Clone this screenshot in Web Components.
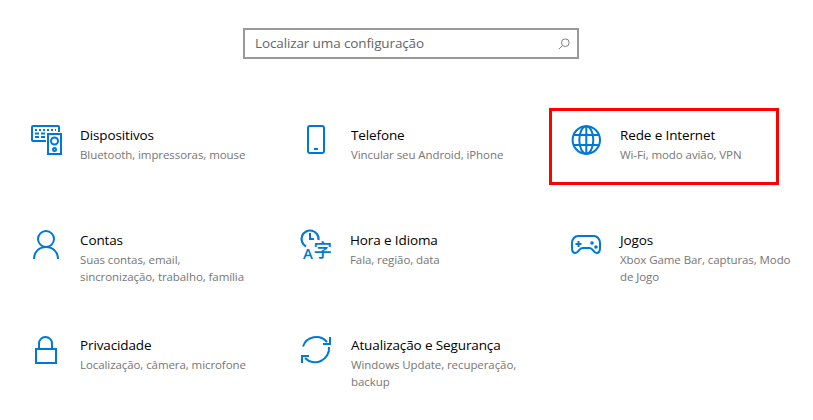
<!DOCTYPE html>
<html lang="pt-BR">
<head>
<meta charset="utf-8">
<title>Configurações</title>
<style>
  html, body { margin: 0; background: #fff; }
  body { font-family: "Open Sans", "Noto Sans", sans-serif; }
  svg.ico { width: 32px; height: 32px; fill: none; stroke: #0078d7; stroke-width: 2; display: block; overflow: visible; }
</style>
</head>
<body>
<settings-home>
  <settings-search slot="search" placeholder="Localizar uma configuração"></settings-search>

  <settings-tile name="Dispositivos" info="Bluetooth, impressoras, mouse">
    <svg class="ico" viewBox="0 0 32 32" slot="icon">
      <path d="M15 16H2a1 1 0 0 1-1-1V2a1 1 0 0 1 1-1h25a1 1 0 0 1 1 1v5"/>
      <rect x="17" y="9" width="13" height="20"/>
      <circle cx="23.500" cy="16" r="3.500"/>
      <circle cx="23.500" cy="24.500" r="1.500"/>
      <path d="M4 5h2M8 5h2M12 5h2M16 5h2M20 5h2M24 5h1M4 8.500h4M10 8.500h4M4 12h4M10 12h4" stroke-width="1.800"/>
    </svg>
  </settings-tile>
  <settings-tile name="Telefone" info="Vincular seu Android, iPhone" style="--gap: 18px">
    <svg class="ico" viewBox="0 0 32 32" slot="icon">
      <rect x="7" y="1" width="16" height="27" rx="2"/>
      <path d="M13 24h4"/>
    </svg>
  </settings-tile>
  <settings-tile name="Rede e Internet" info="Wi-Fi, modo avião, VPN" highlight>
    <svg class="ico" viewBox="0 0 32 32" slot="icon">
      <circle cx="15.300" cy="15" r="13.700"/>
      <ellipse cx="15.300" cy="15" rx="7" ry="13.700"/>
      <path d="M2.800 10h25M2.800 20h25M15.300 1.500v27"/>
    </svg>
  </settings-tile>

  <settings-tile name="Contas" info="Suas contas, email, sincronização, trabalho, família">
    <svg class="ico" viewBox="0 0 32 32" slot="icon">
      <circle cx="15" cy="9" r="8"/>
      <path d="M3 29c0-7 5-12 12-12s12 5 12 12"/>
    </svg>
  </settings-tile>
  <settings-tile name="Hora e Idioma" info="Fala, região, data">
    <svg class="ico" viewBox="0 0 32 32" slot="icon">
      <path d="M5 16.500A8.500 8.500 0 1 1 17.500 10" stroke-width="2.200"/>
      <path d="M9 3v6h4" stroke-width="2"/>
      <text x="2" y="29" font-family="Open Sans" font-size="15" font-weight="600" fill="#0078d7" stroke="none">A</text>
      <text x="12.500" y="27" font-family="Noto Sans CJK SC" font-size="18.500" font-weight="500" fill="#0078d7" stroke="none">字</text>
    </svg>
  </settings-tile>
  <settings-tile name="Jogos" info="Xbox Game Bar, capturas, Modo de Jogo">
    <svg class="ico" viewBox="0 0 32 32" slot="icon">
      <path d="M7 6h16c3 0 6 3 6 7v5c0 3-1.500 5-3.500 5-3 0-3.500-5-7-5h-7c-3.500 0-4 5-7 5C2.500 23 1 21 1 18v-5c0-4 3-7 6-7z"/>
      <path d="M4.500 14h6M7.500 11v6"/>
      <circle cx="21" cy="13" r="1.800" fill="#0078d7" stroke="none"/>
      <circle cx="25" cy="17" r="1.800" fill="#0078d7" stroke="none"/>
    </svg>
  </settings-tile>

  <settings-tile name="Privacidade" info="Localização, câmera, microfone">
    <svg class="ico" viewBox="0 0 32 32" slot="icon">
      <rect x="5" y="14" width="20" height="14"/>
      <path d="M8 14V8.500a6.500 6.500 0 0 1 13 0V14"/>
    </svg>
  </settings-tile>
  <settings-tile name="Atualização e Segurança" info="Windows Update, recuperação, backup" style="--gap: 18px">
    <svg class="ico" viewBox="0 0 32 32" slot="icon">
      <path d="M2 11.500A14 14 0 0 1 26 7"/>
      <path d="M28 12a14 14 0 0 1-24 11"/>
      <path d="M29 2v7h-7M1 28v-7h7" stroke-width="2"/>
    </svg>
  </settings-tile>
</settings-home>

<script>
class SettingsSearch extends HTMLElement {
  constructor() {
    super();
    this.attachShadow({ mode: "open" });
  }

  connectedCallback() {
    this.shadowRoot.innerHTML = `
      <style>
        :host {
          display: flex;
          align-items: center;
          justify-content: space-between;
          box-sizing: border-box;
          width: 336px;
          height: 31px;
          padding: 0 7px 2px 10px;
          border: 2px solid #999;
          background: #fff;
          color: #666;
          font: 13.5px "Open Sans", "Noto Sans", sans-serif;
          letter-spacing: -0.12px;
        }
        svg { width: 12px; height: 12px; margin-top: 2px; fill: none; stroke: #777; stroke-width: 1.100; }
      </style>
      <span>${this.getAttribute("placeholder")}</span>
      <svg viewBox="0 0 14 14">
        <circle cx="8.500" cy="5.500" r="4.500"/>
        <path d="M5.200 8.800L1 13"/>
      </svg>
    `;
  }
}

class SettingsTile extends HTMLElement {
  constructor() {
    super();
    this.attachShadow({ mode: "open" });
  }

  connectedCallback() {
    this.shadowRoot.innerHTML = `
      <style>
        :host {
          display: flex;
          position: relative;
          gap: var(--gap, 17px);
          font-family: "Open Sans", "Noto Sans", sans-serif;
        }
        :host([highlight])::after {
          content: "";
          position: absolute;
          left: -22px;
          top: -17px;
          box-sizing: border-box;
          width: 230px;
          height: 77px;
          border: 3px solid #f00;
        }
        .icon { flex: none; width: 32px; height: 32px; }
        .text { width: 174px; }
        .name { font-size: 13.5px; line-height: 20px; color: #000; letter-spacing: -0.12px; }
        .info { font-size: 11.500px; line-height: 17px; margin-top: 1px; color: #767676; letter-spacing: -0.08px; }
      </style>
      <div class="icon"><slot name="icon"></slot></div>
      <div class="text">
        <div class="name">${this.getAttribute("name")}</div>
        <div class="info">${this.getAttribute("info")}</div>
      </div>
    `;
  }
}

class SettingsHome extends HTMLElement {
  constructor() {
    super();
    this.attachShadow({ mode: "open" });
  }

  connectedCallback() {
    this.shadowRoot.innerHTML = `
      <style>
        :host { display: block; padding: 28px 0 0 31px; }
        .search { display: block; margin-left: 212px; }
        .grid {
          display: grid;
          grid-template-columns: repeat(3, 270px);
          grid-auto-rows: 105px;
          margin-top: 66px;
        }
      </style>
      <div class="search"><slot name="search"></slot></div>
      <div class="grid"><slot></slot></div>
    `;
  }
}

customElements.define("settings-search", SettingsSearch);
customElements.define("settings-tile", SettingsTile);
customElements.define("settings-home", SettingsHome);
</script>
</body>
</html>
